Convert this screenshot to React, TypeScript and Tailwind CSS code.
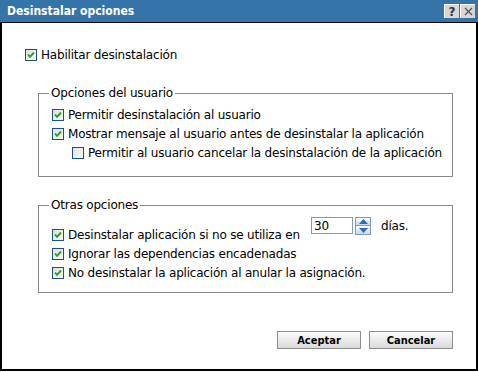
import React from 'react';

const Check: React.FC<{ checked?: boolean }> = ({ checked = true }) => (
  <svg width="12" height="12" viewBox="0 0 12 12" className="shrink-0">
    <defs>
      <linearGradient id="cbg" x1="0" y1="0" x2="1" y2="1">
        <stop offset="0" stopColor="#dcdcd7" />
        <stop offset="1" stopColor="#ffffff" />
      </linearGradient>
    </defs>
    <rect x="0.5" y="0.5" width="11" height="11" fill="url(#cbg)" stroke="#1c5180" />
    {checked && (
      <path d="M3 5.5 L5 7.8 L9 3.5" fill="none" stroke="#21a121" strokeWidth="1.9" />
    )}
  </svg>
);

const Row: React.FC<{ label: string; checked?: boolean; indent?: boolean }> = ({
  label,
  checked = true,
  indent,
}) => (
  <div className={`flex items-center h-[19px] ${indent ? 'ml-[20px]' : ''}`}>
    <Check checked={checked} />
    <span className="ml-[4px] whitespace-nowrap">{label}</span>
  </div>
);

const Button: React.FC<{ label: string }> = ({ label }) => (
  <button className="w-[84px] h-[18px] border border-[#8d8d8d] bg-gradient-to-b from-[#fcfcfc] to-[#dadada] text-[11px] font-bold text-black font-['DejaVu_Sans_Condensed','DejaVu_Sans',sans-serif] leading-none tracking-normal">
    {label}
  </button>
);

export default function App() {
  return (
    <div className="w-[478px] h-[372px] bg-white text-black text-[12px] tracking-[-0.2px] font-['DejaVu_Sans',sans-serif] leading-none">
      {/* Title bar */}
      <div className="h-[23px] bg-[#3574a8] border-b border-black flex items-center pl-[7px] pr-[3px] tracking-normal">
        <span className="flex-1 text-white font-bold text-[12px] font-['DejaVu_Sans_Condensed','DejaVu_Sans',sans-serif]">
          Desinstalar opciones
        </span>
        <div className="flex gap-[1px]">
          <div className="w-[15px] h-[14px] bg-[#d6d6d6] border-t border-l border-white flex items-center justify-center text-[12px] font-bold text-[#333]">
            ?
          </div>
          <div className="w-[15px] h-[14px] bg-[#d6d6d6] border-t border-l border-white flex items-center justify-center">
            <svg width="9" height="9" viewBox="0 0 9 9">
              <path d="M1 1 L8 8 M8 1 L1 8" stroke="#555" strokeWidth="1.3" />
            </svg>
          </div>
        </div>
      </div>

      {/* Body */}
      <div className="h-[348px] border-l-2 border-r-2 border-b-2 border-black pl-[23px] pt-[22px]">
        <Row label="Habilitar desinstalación" />

        <fieldset className="mt-[22px] ml-[13px] w-[415px] border border-[#8a8a8a] pl-[13px] pb-[14px]">
          <legend className="ml-[-3px] px-[2px] leading-[14px]">Opciones del usuario</legend>
          <div className="pt-[5px]">
            <Row label="Permitir desinstalación al usuario" />
            <Row label="Mostrar mensaje al usuario antes de desinstalar la aplicación" />
            <Row indent checked={false} label="Permitir al usuario cancelar la desinstalación de la aplicación" />
          </div>
        </fieldset>

        <fieldset className="mt-[21px] ml-[13px] w-[415px] border border-[#8a8a8a] pl-[13px] pb-[10px]">
          <legend className="ml-[-3px] px-[2px] leading-[14px]">Otras opciones</legend>
          <div className="pt-[5px] flex items-start">
            <div className="w-[259px] mt-[8px]">
              <Row label="Desinstalar aplicación si no se utiliza en" />
            </div>
            <div className="w-[42px] h-[17px] border border-[#7f9db9] pl-[2px] flex items-center">30</div>
            <div className="ml-[2px] flex flex-col w-[16px]">
              <div className="h-[9px] border border-[#7f9db9] bg-gradient-to-b from-[#ffffff] to-[#c6d6ea] flex items-center justify-center">
                <svg width="9" height="5" viewBox="0 0 9 5">
                  <path d="M0 5 L4.5 0 L9 5 Z" fill="#2d6cb1" />
                </svg>
              </div>
              <div className="h-[9px] border border-t-0 border-[#7f9db9] bg-gradient-to-b from-[#ffffff] to-[#c6d6ea] flex items-center justify-center">
                <svg width="9" height="5" viewBox="0 0 9 5">
                  <path d="M0 0 L9 0 L4.5 5 Z" fill="#2d6cb1" />
                </svg>
              </div>
            </div>
            <div className="ml-[10px] h-[18px] flex items-center">días.</div>
          </div>
          <Row label="Ignorar las dependencias encadenadas" />
          <Row label="No desinstalar la aplicación al anular la asignación." />
        </fieldset>

        <div className="mt-[38px] flex justify-end gap-[8px] pr-[23px]">
          <Button label="Aceptar" />
          <Button label="Cancelar" />
        </div>
      </div>
    </div>
  );
}
